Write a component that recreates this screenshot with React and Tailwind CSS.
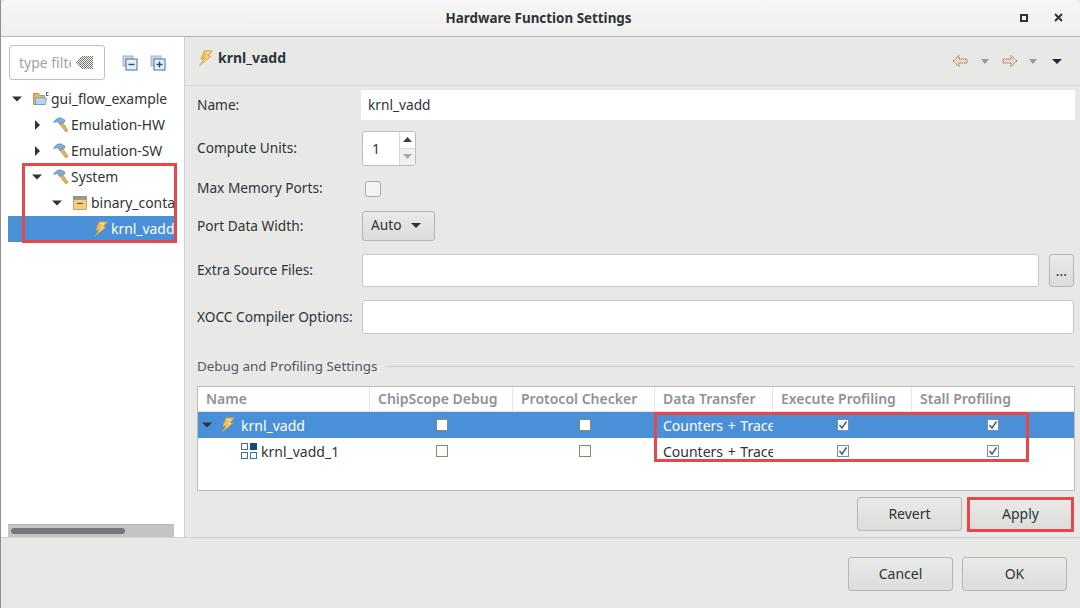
import React from "react";

const font = { fontFamily: '"Noto Sans", sans-serif' };

function Caret({ open, className = "" }) {
  return (
    <svg width="10" height="10" viewBox="0 0 10 10" className={className}>
      {open ? <path d="M0 2.5h10L5 7.5z" fill="#2e3436" /> : <path d="M3 0v10l5-5z" fill="#2e3436" />}
    </svg>
  );
}

function Hammer() {
  return (
    <svg width="16" height="16" viewBox="0 0 16 16">
      <path d="M6.5 6.500l2.500-2 5.500 8.500c.4 1-1.200 2.200-2 1.400z" fill="#eeb457" stroke="#a87a2c" strokeWidth=".7" />
      <path d="M0.800 5.500C2 2.500 4.800.4 8 1l4 2.300-.8 2.200-1.500-.6-3 2.600L5.300 5C3.800 4.500 2.300 4.800.8 5.500z" fill="#7fb0dc" stroke="#4f7ea8" strokeWidth=".7" />
    </svg>
  );
}

function Bolt() {
  return (
    <svg width="16" height="16" viewBox="0 0 16 16">
      <path d="M6 .8h8.500L10 6h3.200L1.500 15.600 6 9.200H2.800z" fill="#f0bb55" stroke="#c99a4e" strokeWidth=".6" />
      <path d="M7 2.500h4L8 6.500h2.500L6 11" fill="none" stroke="#fbe6a8" strokeWidth=".9" />
    </svg>
  );
}

function Dither({ id, color }) {
  return (
    <pattern id={id} width="2" height="2" patternUnits="userSpaceOnUse">
      <rect width="2" height="2" fill="#f5f3ea" />
      <rect width="1" height="1" fill={color} />
      <rect x="1" y="1" width="1" height="1" fill={color} />
    </pattern>
  );
}

function TreeRow({ pad, caret, icon, label, selected }) {
  return (
    <div className={`h-[26px] flex items-center whitespace-nowrap ${selected ? "bg-[#4a90d9] text-white" : "text-[#2e3436]"}`} style={{ paddingLeft: pad }}>
      <span className="w-[21px] shrink-0 flex">{caret !== undefined && <Caret open={caret} />}</span>
      <span className="w-[17px] shrink-0 flex">{icon}</span>
      <span className="ml-[1px]">{label}</span>
    </div>
  );
}

function Check({ checked, selected }) {
  return (
    <svg width="12" height="12" viewBox="0 0 12 12" className="block">
      <rect x=".5" y=".5" width="11" height="11" fill={selected ? "#fff" : "#fbfbfa"} stroke={checked ? "#7d8ba5" : "#8a8a6a"} />
      {checked && <path d="M2.500 6l2.500 3 4.500-6.500" fill="none" stroke="#3d5a86" strokeWidth="1.400" />}
    </svg>
  );
}

function Btn({ label }) {
  return (
    <button className="w-[105px] h-[34px] pb-[2px] rounded-[3px] border border-[#b5b5b2] bg-gradient-to-b from-[#eaeae8] to-[#dcdcda] text-[14px] text-[#2e3436]">
      {label}
    </button>
  );
}

function FormLabel({ children, up = false }) {
  return <div className={`w-[165px] shrink-0 text-[13.7px] text-[#2e3436] whitespace-nowrap ${up ? "pb-[2px]" : ""}`}>{children}</div>;
}

const colClass = "grid grid-cols-[172px_143px_142px_118px_139px_1fr]";

function HeadCell({ children, last }) {
  return (
    <div className={`h-[24px] pb-[2px] flex items-center pl-2 text-[14px] font-semibold text-[#8f9294] whitespace-nowrap ${last ? "" : "border-r border-[#e4e4e2]"}`}>
      {children}
    </div>
  );
}

function TableRow({ selected, name, pad, icon, caret }) {
  return (
    <div className={`${colClass} h-[26px] items-center text-[14px] ${selected ? "bg-[#4a90d9] text-white" : "text-[#2e3436]"}`}>
      <div className="flex items-center" style={{ paddingLeft: pad }}>
        {caret && <Caret open className="mr-[8px]" />}
        <span className={`flex ${caret ? "w-[21px]" : "w-[20px]"}`}>{icon}</span>
        <span className="whitespace-nowrap">{name}</span>
      </div>
      <div className="flex justify-center"><Check selected={selected} /></div>
      <div className="flex justify-center pl-[2px]"><Check selected={selected} /></div>
      <div className="pl-2 overflow-hidden whitespace-nowrap [word-spacing:1px]">Counters + Trace</div>
      <div className="flex justify-center"><Check checked selected={selected} /></div>
      <div className="flex pl-[75px]"><Check checked selected={selected} /></div>
    </div>
  );
}

export default function App() {
  return (
    <div className="relative w-[1080px] h-[608px] overflow-hidden bg-[#e8e8e7] flex flex-col border-l border-[#8f8f8d]" style={font}>
      {/* Title bar */}
      <div className="h-[37px] shrink-0 relative flex items-center justify-center pr-[4px] border-b border-[#b6b6b3] bg-gradient-to-b from-[#f6f6f6] to-[#efefee] rounded-t-[6px]">
        <span className="text-[13.4px] font-bold text-[#2e3436]">Hardware Function Settings</span>
        <div className="absolute right-[17px] top-[13px] flex items-center gap-[26px]">
          <svg width="8" height="8" viewBox="0 0 8 8"><rect x="1" y="1" width="6" height="6" fill="none" stroke="#2e3436" strokeWidth="2" /></svg>
          <svg width="9" height="9" viewBox="0 0 9 9"><path d="M1 1l7 7M8 1L1 8" stroke="#2e3436" strokeWidth="2" /></svg>
        </div>
      </div>

      <div className="h-[501px] shrink-0 flex border-b border-[#d0d0ce]">
        {/* Left tree panel */}
        <div className="w-[184px] shrink-0 bg-white border-r border-[#cfcfcd] flex flex-col pl-[7px]">
          <div className="h-[49px] pt-[8px] flex items-start">
            <div className="ml-[1px] w-[96px] h-[35px] rounded-[3px] border border-[#c0c0bd] flex items-center pl-[9px] overflow-hidden">
              <span className="w-[52px] overflow-hidden whitespace-nowrap text-[14px] text-[#a0a3a3]">type filter text</span>
              <svg width="17" height="13" viewBox="0 0 17 13" className="ml-[5px]">
                <defs><Dither id="filterClear" color="#777" /></defs>
                <path d="M0 6.500L6 0h11v13H6z" fill="url(#filterClear)" />
              </svg>
            </div>
            <svg width="16" height="16" viewBox="0 0 16 16" className="ml-[17px] mt-[10px]">
              <rect x="1" y="1" width="10" height="10" fill="#c8d6e6" stroke="#9db3cc" />
              <rect x="4" y="4" width="11" height="11" fill="#e6eef6" stroke="#47719c" />
              <path d="M6.500 9.500h6" stroke="#234f7d" strokeWidth="1.400" />
            </svg>
            <svg width="16" height="16" viewBox="0 0 16 16" className="ml-[12px] mt-[10px]">
              <rect x="1" y="1" width="10" height="10" fill="#c8d6e6" stroke="#9db3cc" />
              <rect x="4" y="4" width="11" height="11" fill="#e6eef6" stroke="#47719c" />
              <path d="M6.500 9.500h6M9.500 6.500v6" stroke="#234f7d" strokeWidth="1.400" />
            </svg>
          </div>
          <div className="w-[166px] text-[13.9px] overflow-hidden">
            <TreeRow
              pad={4}
              caret={true}
              icon={
                <svg width="16" height="16" viewBox="0 0 16 16">
                  <path d="M.5 2.500h5l1 2h5v9H.5z" fill="#e4b761" stroke="#a97f38" strokeWidth=".8" />
                  <path d="M2.500 7h11l-1 6.500H2.500z" fill="#b9d5ee" stroke="#6f97bd" strokeWidth=".8" />
                  <path d="M15.500 1.500h-2v3h2" fill="none" stroke="#2f5f8f" strokeWidth="1" />
                </svg>
              }
              label="gui_flow_example"
            />
            <TreeRow pad={24} caret={false} icon={<Hammer />} label="Emulation-HW" />
            <TreeRow pad={24} caret={false} icon={<Hammer />} label="Emulation-SW" />
            <TreeRow pad={24} caret={true} icon={<Hammer />} label="System" />
            <TreeRow
              pad={44}
              caret={true}
              icon={
                <svg width="14" height="14" viewBox="0 0 14 14">
                  <rect x=".5" y=".5" width="13" height="3" fill="#8a9bb0" stroke="#7a6a4a" strokeWidth=".6" />
                  <rect x=".5" y="3.500" width="13" height="10" fill="#f2cf85" stroke="#b98c3e" strokeWidth=".7" />
                  <path d="M4 7.500h6" stroke="#7a5a20" strokeWidth="1.200" />
                </svg>
              }
              label="binary_container_1"
            />
            <TreeRow pad={64} icon={<Bolt />} label="krnl_vadd" selected />
          </div>
          <div className="mt-auto w-[166px] h-[13px] bg-[#c3c5c3] border-t border-[#b4b6b4] flex items-center pl-[3px]">
            <div className="w-[114px] h-[6px] rounded-full bg-[#737777]" />
          </div>
        </div>

        {/* Right settings panel */}
        <div className="flex-1 flex flex-col min-w-0">
          <div className="h-[49px] shrink-0 flex items-center border-b border-[#d6d6d4] pl-[13px] pr-[18px]">
            <div className="flex items-center -mt-[7px]">
              <Bolt />
              <span className="ml-[4px] text-[14px] font-bold text-[#2e3436]">krnl_vadd</span>
            </div>
            <div className="ml-auto flex items-center">
              <svg width="16" height="14" viewBox="0 0 16 14">
                <defs><Dither id="arrowFill" color="#cfc9b0" /></defs>
                <path d="M1 7l6-5.500V5h8v4H7v3.500z" fill="url(#arrowFill)" stroke="#7d5315" strokeDasharray="1 1" />
              </svg>
              <svg width="10" height="5" viewBox="0 0 10 5" className="ml-[12px]"><path d="M1 0h8L5 5z" fill="#9a9a9a" /></svg>
              <svg width="16" height="14" viewBox="0 0 16 14" className="ml-[12px]">
                <path d="M15 7L9 1.500V5H1v4h8v3.500z" fill="url(#arrowFill)" stroke="#7d5315" strokeDasharray="1 1" />
              </svg>
              <svg width="10" height="5" viewBox="0 0 10 5" className="ml-[10px]"><path d="M1 0h8L5 5z" fill="#9a9a9a" /></svg>
              <svg width="10" height="5" viewBox="0 0 10 5" className="ml-[14px]"><path d="M0 0h10L5 5z" fill="#2a2040" /></svg>
            </div>
          </div>

          <div className="pl-[12px] pr-[5px] flex flex-col">
            <div className="flex items-center mt-[4px] h-[30px]">
              <FormLabel>Name:</FormLabel>
              <div className="-ml-[1px] flex-1 h-[30px] bg-white flex items-center pl-[7px] text-[13.7px] text-[#2e3436]">krnl_vadd</div>
            </div>
            <div className="flex items-center mt-[11px] h-[35px]">
              <FormLabel>Compute Units:</FormLabel>
              <div className="w-[54px] h-[35px] bg-white border border-[#bdbdba] rounded-[3px] flex">
                <span className="flex-1 flex items-center pl-[9px] text-[14px] text-[#2e3436]">1</span>
                <div className="w-[16px] border-l border-[#d8d8d6] flex flex-col">
                  <div className="h-1/2 flex items-center justify-center border-b border-[#d8d8d6]">
                    <svg width="9" height="5" viewBox="0 0 9 5"><path d="M0 5h9L4.500 0z" fill="#3a3f41" /></svg>
                  </div>
                  <div className="h-1/2 flex items-center justify-center bg-[#f0f0ee]">
                    <svg width="9" height="5" viewBox="0 0 9 5"><path d="M0 0h9L4.500 5z" fill="#a6a8a8" /></svg>
                  </div>
                </div>
              </div>
            </div>
            <div className="flex items-center mt-[13px] h-[20px]">
              <FormLabel up>Max Memory Ports:</FormLabel>
              <div className="ml-[3px] w-[16px] h-[16px] rounded-[3px] border border-[#a9a9a6] bg-[#f4f4f3]" />
            </div>
            <div className="flex items-center mt-[12px] h-[30px]">
              <FormLabel>Port Data Width:</FormLabel>
              <div className="w-[73px] h-[30px] pb-[1px] rounded-[3px] border border-[#b5b5b2] bg-gradient-to-b from-[#eaeae8] to-[#dcdcda] flex items-center pl-[8px] text-[13.7px] text-[#2e3436]">
                Auto
                <svg width="10" height="5" viewBox="0 0 10 5" className="ml-[10px]"><path d="M0 0h10L5 5z" fill="#2e3436" /></svg>
              </div>
            </div>
            <div className="flex items-center mt-[13px] h-[33px]">
              <FormLabel>Extra Source Files:</FormLabel>
              <div className="w-[677px] h-[33px] bg-white border border-[#c6c6c3] rounded-[3px]" />
              <div className="ml-[10px] w-[25px] h-[33px] rounded-[3px] border border-[#b5b5b2] bg-gradient-to-b from-[#eaeae8] to-[#dcdcda] flex items-center justify-center text-[14px] text-[#2e3436]">...</div>
            </div>
            <div className="flex items-center mt-[13px] h-[34px]">
              <FormLabel>XOCC Compiler Options:</FormLabel>
              <div className="flex-1 mr-[1px] h-[34px] bg-white border border-[#c6c6c3] rounded-[3px]" />
            </div>

            {/* Debug and Profiling group */}
            <div className="flex items-center mt-[22px] h-[20px] text-[13.4px] text-[#52585a]">
              <span className="whitespace-nowrap">Debug and Profiling Settings</span>
              <div className="flex-1 ml-[8px] h-px bg-[#d0d0ce]" />
            </div>
            <div className="mt-[10px] h-[105px] bg-white border border-[#bcbcb9]">
              <div className={`${colClass} border-b border-[#e4e4e2]`}>
                <HeadCell>Name</HeadCell>
                <HeadCell>ChipScope Debug</HeadCell>
                <HeadCell>Protocol Checker</HeadCell>
                <HeadCell>Data Transfer</HeadCell>
                <HeadCell>Execute Profiling</HeadCell>
                <HeadCell last>Stall Profiling</HeadCell>
              </div>
              <TableRow selected caret name="krnl_vadd" pad={4} icon={<Bolt />} />
              <TableRow
                name="krnl_vadd_1"
                pad={43}
                icon={
                  <svg width="16" height="16" viewBox="0 0 16 16">
                    <rect x=".5" y=".5" width="6" height="6" fill="none" stroke="#3f6f9f" />
                    <rect x="9" y="0" width="7" height="7" fill="#174a80" />
                    <rect x=".5" y="9.500" width="6" height="6" fill="none" stroke="#3f6f9f" />
                    <rect x="9.500" y="9.500" width="6" height="6" fill="none" stroke="#3f6f9f" />
                  </svg>
                }
              />
            </div>
            <div className="flex justify-end gap-[6px] mt-[6px] pr-[2px]">
              <Btn label="Revert" />
              <Btn label="Apply" />
            </div>
          </div>
        </div>
      </div>

      {/* Footer */}
      <div className="flex-1 flex justify-end items-start gap-[9px] pt-[19px] pr-[13px]">
        <Btn label="Cancel" />
        <Btn label="OK" />
      </div>

      {/* Red annotation boxes */}
      <div className="absolute left-[21px] top-[163px] w-[155px] h-[80px] border-[3px] border-[#e8474a]" />
      <div className="absolute left-[653px] top-[412px] w-[375px] h-[50px] border-[3px] border-[#e8474a]" />
      <div className="absolute left-[966px] top-[497px] w-[107px] h-[35px] border-[3px] border-[#e8474a]" />
    </div>
  );
}
